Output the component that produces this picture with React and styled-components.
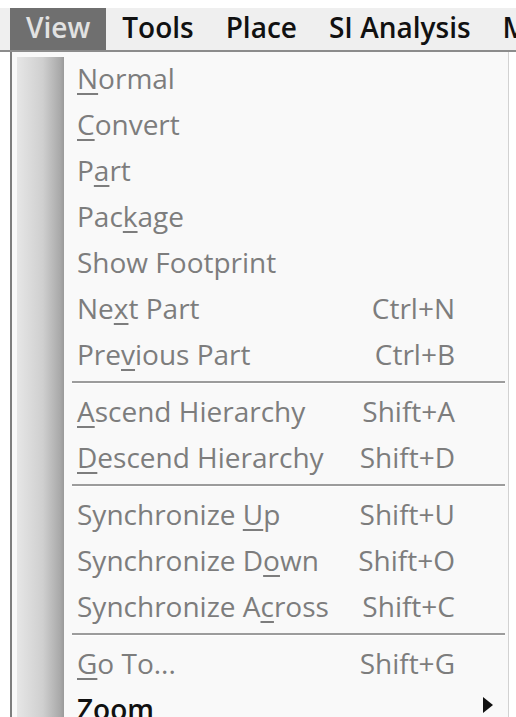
import React from 'react'
import styled, { createGlobalStyle } from 'styled-components'

const Global = createGlobalStyle`
  html, body { margin: 0; padding: 0; background: #ffffff; }
  body { font-family: "Open Sans", "Noto Sans", sans-serif; }
`

const Screen = styled.div`
  width: 516px;
  height: 717px;
  overflow: hidden;
  background: #ffffff;
  padding-top: 8px;
  box-sizing: border-box;
`

const MenuBar = styled.div`
  display: flex;
  align-items: stretch;
  height: 42px;
  padding-left: 10px;
  background: #efefef;
  border-bottom: 2px solid #8c8c8c;
  white-space: nowrap;
  overflow: hidden;
`

const BarItem = styled.div`
  display: flex;
  align-items: center;
  padding: 0 16px 5px;
  font-size: 28px;
  font-weight: 600;
  color: ${p => (p.$active ? '#e2e2e2' : '#111111')};
  background: ${p => (p.$active ? '#6f6f6f' : 'transparent')};
`

const Dropdown = styled.div`
  display: flex;
  margin-left: 10px;
  width: 499px;
  height: 680px;
  box-sizing: border-box;
  border-left: 2px solid #7e7e7e;
  border-right: 1px solid #d2d2d2;
  background: #f9f9f9;
`

const Gutter = styled.div`
  width: 47px;
  margin: 5px 0 0 5px;
  flex-shrink: 0;
  background: linear-gradient(to right, #e6e6e6 0%, #cfcfcf 55%, #a9a9a9 92%, #9a9a9a 100%);
`

const List = styled.div`
  flex: 1;
  padding: 3px 3px 0 8px;
`

const Item = styled.div`
  display: grid;
  grid-template-columns: 1fr auto 50px;
  align-items: center;
  height: 46px;
  padding-left: 5px;
  font-size: 28px;
  line-height: 46px;
  color: ${p => (p.$enabled ? '#111111' : '#7d7d7d')};
  font-weight: ${p => (p.$enabled ? 600 : 400)};
  white-space: nowrap;
`

const Key = styled.span`
  text-align: right;
`

const Mn = styled.span`
  text-decoration: underline;
  text-decoration-thickness: 2px;
  text-underline-offset: 4px;
`

const Separator = styled.div`
  height: 11px;
  display: flex;
  align-items: center;
  &::before {
    content: '';
    flex: 1;
    height: 2px;
    background: #9c9c9c;
    border-bottom: 1px solid #ffffff;
  }
`

const Arrow = styled.svg`
  justify-self: start;
  margin-left: 28px;
  margin-top: -8px;
  width: 10px;
  height: 16px;
`

const label = (text, idx) => {
  if (idx < 0) return text
  return (
    <>
      {text.slice(0, idx)}
      <Mn>{text[idx]}</Mn>
      {text.slice(idx + 1)}
    </>
  )
}

const groups = [
  [
    { text: 'Normal', mn: 0 },
    { text: 'Convert', mn: 0 },
    { text: 'Part', mn: 1 },
    { text: 'Package', mn: 3 },
    { text: 'Show Footprint', mn: -1 },
    { text: 'Next Part', mn: 2, key: 'Ctrl+N' },
    { text: 'Previous Part', mn: 3, key: 'Ctrl+B' },
  ],
  [
    { text: 'Ascend Hierarchy', mn: 0, key: 'Shift+A' },
    { text: 'Descend Hierarchy', mn: 0, key: 'Shift+D' },
  ],
  [
    { text: 'Synchronize Up', mn: 12, key: 'Shift+U' },
    { text: 'Synchronize Down', mn: 13, key: 'Shift+O' },
    { text: 'Synchronize Across', mn: 13, key: 'Shift+C' },
  ],
  [
    { text: 'Go To...', mn: 0, key: 'Shift+G' },
    { text: 'Zoom', mn: -1, enabled: true, sub: true },
  ],
]

export default function App() {
  return (
    <Screen>
      <Global />
      <MenuBar>
        <BarItem $active>View</BarItem>
        <BarItem>Tools</BarItem>
        <BarItem>Place</BarItem>
        <BarItem>SI Analysis</BarItem>
        <BarItem>Macro</BarItem>
      </MenuBar>
      <Dropdown>
        <Gutter />
        <List>
          {groups.map((g, gi) => (
            <React.Fragment key={gi}>
              {gi > 0 && <Separator />}
              {g.map(it => (
                <Item key={it.text} $enabled={it.enabled}>
                  <span>{label(it.text, it.mn)}</span>
                  <Key>{it.key || ''}</Key>
                  {it.sub ? (
                    <Arrow viewBox="0 0 10 16">
                      <path d="M0 0 L10 8 L0 16 Z" fill="#111" />
                    </Arrow>
                  ) : (
                    <span />
                  )}
                </Item>
              ))}
            </React.Fragment>
          ))}
        </List>
      </Dropdown>
    </Screen>
  )
}
